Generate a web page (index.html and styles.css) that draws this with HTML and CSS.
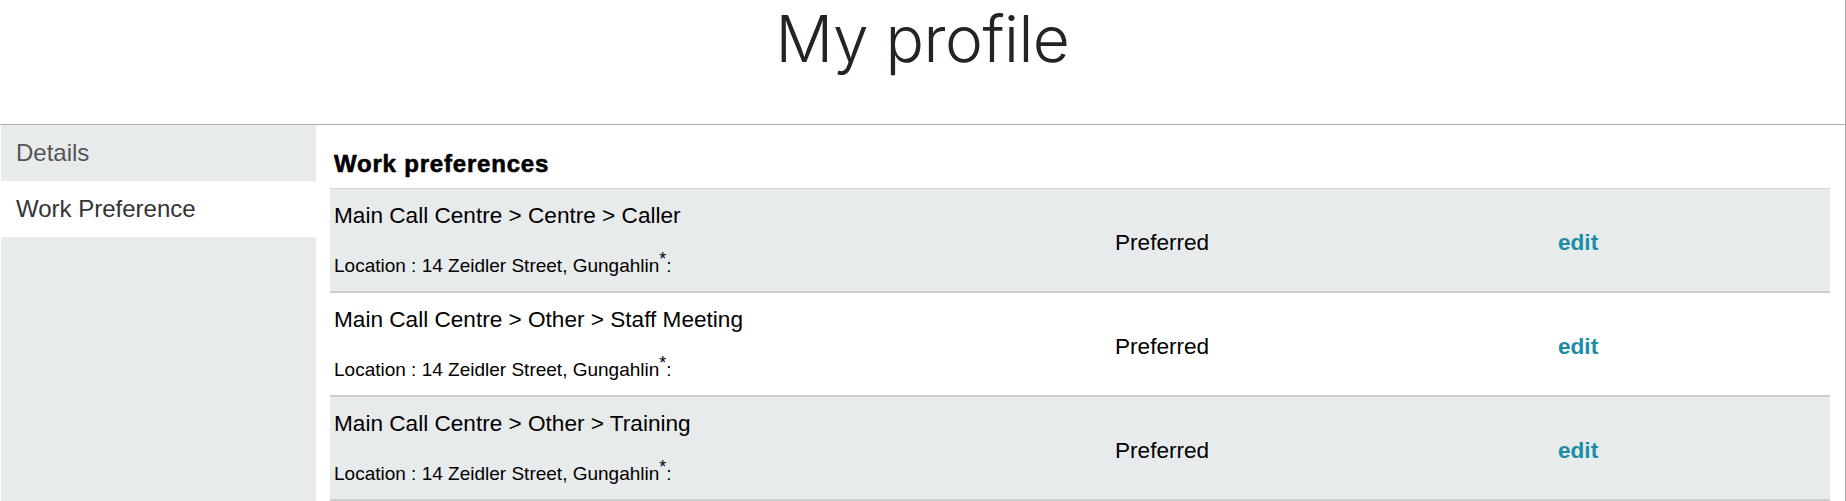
FILE: index.html
```html
<!DOCTYPE html>
<html lang="en">
<head>
<meta charset="utf-8">
<title>My profile</title>
<link rel="stylesheet" href="styles.css">
</head>
<body>
<div class="page">
  <header class="page-header">
    <h1 class="page-title">My profile</h1>
  </header>
  <div class="layout">
    <nav class="sidebar">
      <a class="side-item" href="#">Details</a>
      <a class="side-item active" href="#">Work Preference</a>
    </nav>
    <main class="main">
      <h2 class="section-title">Work preferences</h2>
      <div class="pref-list">
        <div class="pref-row shaded">
          <div class="pref-info">
            <div class="pref-name">Main Call Centre &gt; Centre &gt; Caller</div>
            <div class="pref-loc">Location : 14 Zeidler Street, Gungahlin<sup>*</sup>:</div>
          </div>
          <div class="pref-status">Preferred</div>
          <div class="pref-action"><a class="edit-link" href="#">edit</a></div>
        </div>
        <div class="pref-row">
          <div class="pref-info">
            <div class="pref-name">Main Call Centre &gt; Other &gt; Staff Meeting</div>
            <div class="pref-loc">Location : 14 Zeidler Street, Gungahlin<sup>*</sup>:</div>
          </div>
          <div class="pref-status">Preferred</div>
          <div class="pref-action"><a class="edit-link" href="#">edit</a></div>
        </div>
        <div class="pref-row shaded">
          <div class="pref-info">
            <div class="pref-name">Main Call Centre &gt; Other &gt; Training</div>
            <div class="pref-loc">Location : 14 Zeidler Street, Gungahlin<sup>*</sup>:</div>
          </div>
          <div class="pref-status">Preferred</div>
          <div class="pref-action"><a class="edit-link" href="#">edit</a></div>
        </div>
      </div>
    </main>
  </div>
</div>
</body>
</html>
```

FILE: styles.css
```css
* {
  box-sizing: border-box;
}

html, body {
  margin: 0;
  padding: 0;
  background: #ffffff;
  font-family: "Liberation Sans", Arial, sans-serif;
  color: #000;
}

.page {
  height: 100vh;
  display: flex;
  flex-direction: column;
  border-right: 1px solid #a9a9a9;
  overflow: hidden;
}

.page-header {
  height: 125px;
  border-bottom: 1px solid #b0b0b0;
  flex: none;
}

.page-title {
  margin: 0;
  text-align: center;
  font-family: Inter, "Open Sans", sans-serif;
  font-weight: 300;
  font-size: 64px;
  line-height: 77px;
  color: #212529;
  letter-spacing: -0.5px;
}

.layout {
  flex: 1;
  display: flex;
  gap: 14px;
  padding-left: 1px;
  padding-right: 15px;
}

.sidebar {
  width: 315px;
  flex: none;
  background: #e8ebec;
  display: flex;
  flex-direction: column;
}

.side-item {
  display: block;
  height: 56px;
  line-height: 56px;
  padding-left: 15px;
  font-size: 24px;
  color: #555;
  text-decoration: none;
}

.side-item.active {
  background: #ffffff;
  color: #333;
}

.main {
  flex: 1;
  min-width: 0;
}

.section-title {
  margin: 24px 0 10px 4px;
  font-size: 24px;
  line-height: 29px;
  font-weight: 700;
  letter-spacing: 0.8px;
  -webkit-text-stroke: 0.6px #000;
  color: #000;
}

.pref-list {
  border-top: 1px solid #d4d4d4;
}

.pref-row {
  display: grid;
  grid-template-columns: 781px 443px 1fr;
  border-bottom: 2px solid #cdcdcd;
  height: 104px;
}

.pref-row.shaded {
  background: #e8ebec;
}

.pref-info {
  padding: 13px 4px 0 4px;
}

.pref-name {
  font-size: 22.6px;
  line-height: 27px;
}

.pref-loc {
  margin-top: 25px;
  font-size: 19px;
  line-height: 23px;
}

.pref-loc sup {
  font-size: 18px;
  line-height: 0;
}

.pref-status,
.pref-action {
  align-self: center;
  padding: 5px 4px 0 4px;
  font-size: 22.6px;
  line-height: 27px;
}

.edit-link {
  color: #1a8da6;
  font-weight: 700;
  text-decoration: none;
}
```
